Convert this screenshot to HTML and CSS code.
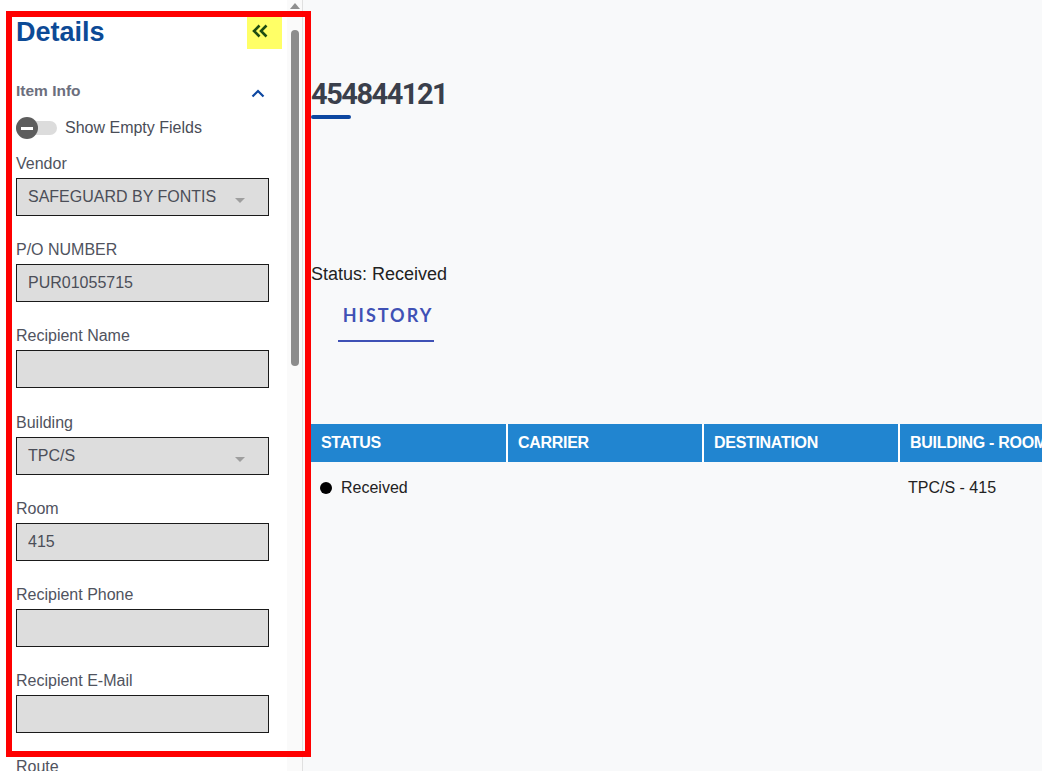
FILE: index.html
```html
<!DOCTYPE html>
<html lang="en">
<head>
<meta charset="UTF-8" />
<meta name="viewport" content="width=device-width, initial-scale=1" />
<title>Item 454844121</title>
<link rel="stylesheet" href="styles.css">
</head>
<body>

<div class="layout">

  <aside class="details-panel">
    <div class="details-body">
      <div class="details-head">
        <h1>Details</h1>
        <button class="collapse-btn" title="Collapse">
          <svg width="35" height="32" viewBox="0 0 35 32">
            <polyline points="12.5,8.5 7,14 12.5,19.5" />
            <polyline points="19.5,8.5 14,14 19.5,19.5" />
          </svg>
        </button>
      </div>

      <div class="section-head">
        <span>Item Info</span>
        <svg width="14" height="10" viewBox="0 0 14 10">
          <polyline points="1.5,8.5 7,3 12.5,8.5" />
        </svg>
      </div>

      <div class="toggle-row">
        <span class="toggle-track"><span class="toggle-knob"></span></span>
        Show Empty Fields
      </div>

      <div class="fields">
        <div class="field">
          <label>Vendor</label>
          <div class="input select">SAFEGUARD BY FONTIS<span class="caret"></span></div>
        </div>
        <div class="field">
          <label>P/O NUMBER</label>
          <input class="input" type="text" value="PUR01055715" readonly />
        </div>
        <div class="field">
          <label>Recipient Name</label>
          <input class="input" type="text" value="" readonly />
        </div>
        <div class="field">
          <label>Building</label>
          <div class="input select">TPC/S<span class="caret"></span></div>
        </div>
        <div class="field">
          <label>Room</label>
          <input class="input" type="text" value="415" readonly />
        </div>
        <div class="field">
          <label>Recipient Phone</label>
          <input class="input" type="text" value="" readonly />
        </div>
        <div class="field">
          <label>Recipient E-Mail</label>
          <input class="input" type="text" value="" readonly />
        </div>
        <div class="field">
          <label>Route</label>
          <div class="input select"><span class="caret"></span></div>
        </div>
      </div>
    </div>

    <div class="scrollbar">
      <span class="scroll-arrow"></span>
      <span class="scroll-thumb"></span>
    </div>
  </aside>

  <main class="content">
    <h2 class="item-number">454844121</h2>
    <div class="title-bar"></div>

    <p class="status">Status: Received</p>

    <div class="tabs">
      <div class="tab active">HISTORY</div>
    </div>

    <table class="history">
      <colgroup>
        <col style="width:195px">
        <col style="width:196px">
        <col style="width:196px">
        <col style="width:196px">
      </colgroup>
      <thead>
        <tr>
          <th>STATUS</th>
          <th>CARRIER</th>
          <th>DESTINATION</th>
          <th>BUILDING - ROOM</th>
        </tr>
      </thead>
      <tbody>
        <tr>
          <td><span class="dot"></span>Received</td>
          <td></td>
          <td></td>
          <td>TPC/S - 415</td>
        </tr>
      </tbody>
    </table>
  </main>

</div>

<div class="highlight"></div>

</body>
</html>
```

FILE: styles.css
```css
body {
  margin: 0;
  font-family: "Liberation Sans", Arial, sans-serif;
  background: #f8f9fa;
  overflow: hidden;
}
.layout {
  display: flex;
  height: 100vh;
}

/* left panel */
.details-panel {
  flex: 0 0 303px;
  display: flex;
  background: #fff;
  border-right: 1px solid #e0e0e0;
  box-sizing: border-box;
  overflow: hidden;
}
.details-body {
  flex: 0 0 287px;
  box-sizing: border-box;
  padding-left: 16px;
}
.details-head {
  display: flex;
  justify-content: space-between;
  align-items: flex-start;
  margin-top: 17px;
  padding-right: 5px;
}
.details-head h1 {
  margin: 2px 0 0;
  font-size: 27px;
  line-height: 26px;
  color: #0c4a96;
}
.collapse-btn {
  width: 35px;
  height: 32px;
  border: 0;
  padding: 0;
  background: #ffff66;
  display: flex;
  cursor: pointer;
}
.collapse-btn polyline {
  fill: none;
  stroke: #1e4d12;
  stroke-width: 2.6;
}
.section-head {
  display: flex;
  justify-content: space-between;
  align-items: center;
  width: 253px;
  margin-top: 32px;
  font-size: 15.5px;
  font-weight: bold;
  line-height: 20px;
  color: #6c6f7d;
}
.section-head svg {
  margin: 3px 4px 0 0;
}
.section-head polyline {
  fill: none;
  stroke: #0d47a1;
  stroke-width: 2.2;
}
.toggle-row {
  display: flex;
  align-items: center;
  height: 22px;
  margin-top: 16px;
  font-size: 16px;
  color: #4a4d57;
}
.toggle-track {
  display: flex;
  align-items: center;
  width: 41px;
  height: 14px;
  border-radius: 7px;
  background: #dcdcdc;
  margin-right: 8px;
}
.toggle-knob {
  flex: none;
  display: flex;
  align-items: center;
  justify-content: center;
  width: 22px;
  height: 22px;
  margin: -4px 0;
  border-radius: 50%;
  background: #5d5d5d;
}
.toggle-knob::before {
  content: "";
  width: 12px;
  height: 3px;
  background: #fff;
}
.fields {
  margin-top: 15px;
}
.field {
  margin-bottom: 24.2px;
}
.field label {
  display: block;
  font-size: 16px;
  line-height: 20px;
  color: #50535e;
  margin-bottom: 4px;
}
.input {
  display: flex;
  align-items: center;
  box-sizing: border-box;
  width: 253px;
  height: 38px;
  margin: 0;
  padding: 0 11px;
  border: 1px solid #1a1a1a;
  border-radius: 0;
  background: #ddd;
  font-family: "Liberation Sans", Arial, sans-serif;
  font-size: 16px;
  color: #4b4e58;
  outline: none;
}
.select {
  justify-content: space-between;
}
.caret {
  margin: 7px 12px 0 auto;
  border-left: 5px solid transparent;
  border-right: 5px solid transparent;
  border-top: 5px solid #9e9e9e;
}

/* fake scrollbar of the panel */
.scrollbar {
  flex: 0 0 15px;
  display: flex;
  flex-direction: column;
  align-items: center;
  background: #fafafa;
}
.scroll-arrow {
  margin-top: 3px;
  border-left: 5px solid transparent;
  border-right: 5px solid transparent;
  border-bottom: 6px solid #8f8f8f;
}
.scroll-thumb {
  width: 8px;
  height: 336px;
  margin-top: 21px;
  border-radius: 4px;
  background: #8c8c8c;
}

/* main */
.content {
  flex: 1;
  min-width: 0;
  overflow: hidden;
  padding-left: 8px;
}
.item-number {
  margin: 77px 0 0;
  font-family: Roboto, "Liberation Sans", sans-serif;
  font-weight: 700;
  font-size: 29px;
  line-height: 34px;
  letter-spacing: -1.5px;
  color: #3a3f4b;
}
.title-bar {
  width: 40px;
  height: 4px;
  margin-top: 4px;
  border-radius: 2px;
  background: #0d47a1;
}
.status {
  margin: 144px 0 0;
  font-size: 18px;
  line-height: 22px;
  color: #222;
}
.tabs {
  margin-top: 18px;
  padding-left: 27px;
}
.tab {
  display: inline-block;
  box-sizing: border-box;
  width: 96px;
  padding-bottom: 13px;
  text-align: center;
  text-indent: 4px;
  font-family: Lato, "Liberation Sans", sans-serif;
  font-weight: 700;
  font-size: 18px;
  line-height: 24px;
  letter-spacing: 2px;
  color: #3f51b5;
  border-bottom: 2px solid #3f51b5;
}
.history {
  margin-top: 82px;
  border-collapse: separate;
  border-spacing: 0;
  table-layout: fixed;
  width: 783px;
}
.history th {
  height: 38px;
  padding: 0 10px;
  background: #2185d0;
  color: #fff;
  text-align: left;
  font-size: 16px;
  letter-spacing: -0.3px;
  white-space: nowrap;
  border-left: 2px solid #fff;
}
.history th:first-child {
  border-left: 0;
}
.history td {
  height: 52px;
  padding: 0 10px;
  font-size: 16px;
  color: #222;
  white-space: nowrap;
}
.history td:first-child {
  padding-left: 9px;
}
.dot {
  display: inline-block;
  width: 12px;
  height: 12px;
  margin-right: 9px;
  border-radius: 50%;
  background: #000;
  vertical-align: -1px;
}

/* red annotation frame over the panel */
.highlight {
  position: absolute;
  left: 6px;
  top: 11px;
  width: 305px;
  height: 746px;
  box-sizing: border-box;
  border: 6px solid #ff0000;
  pointer-events: none;
}
```
